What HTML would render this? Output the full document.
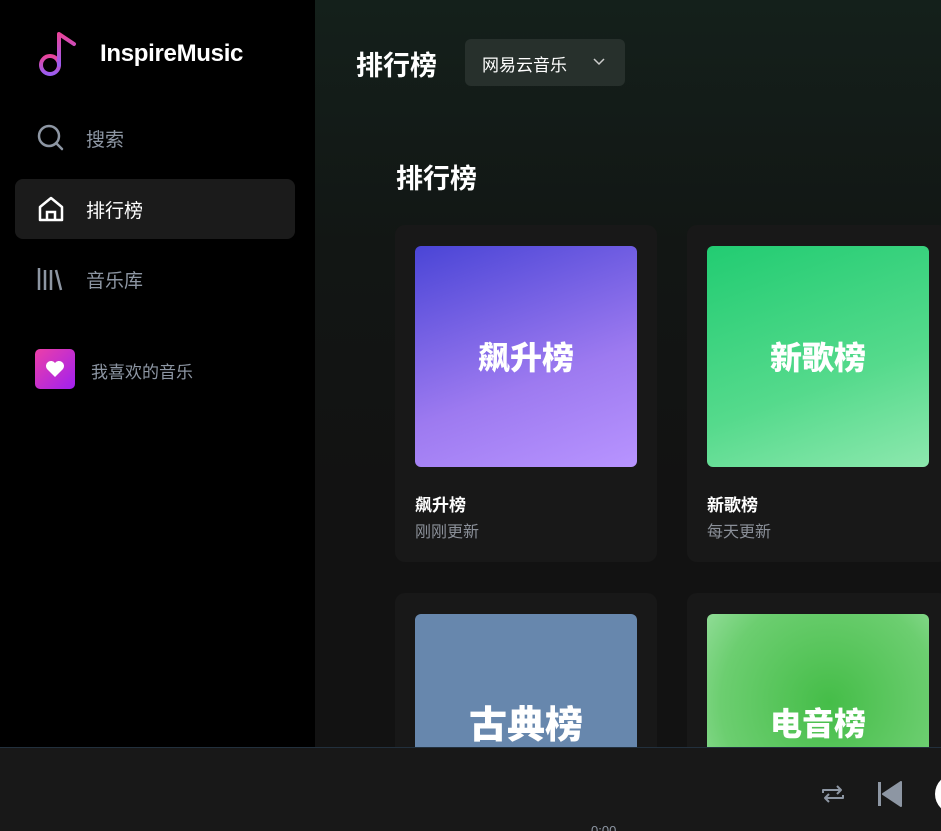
<!DOCTYPE html>
<html><head><meta charset="utf-8"><style>
*{margin:0;padding:0;box-sizing:border-box}
html,body{width:941px;height:831px;overflow:hidden}
body{background:#000;font-family:"Liberation Sans","Noto Sans CJK SC",sans-serif;position:relative}
.side{position:absolute;left:0;top:0;width:315px;height:747px;background:#000}
.main{position:absolute;left:315px;top:0;width:626px;height:747px;background:linear-gradient(180deg,#14201b 0px,#121614 250px,#121212 500px);overflow:hidden}
.nav{position:absolute;left:15px;width:280px;height:60px;border-radius:8px;display:flex;align-items:center;font-size:19px;color:#8d96a3}
.nav svg{position:absolute;left:22px}
.nav span{position:absolute;left:71px}
.card{position:absolute;width:262px;height:337px;background:#181818;border-radius:10px}
.img{position:absolute;left:20px;top:21px;width:222px;height:221px;border-radius:6px;overflow:hidden;color:#fff;font-weight:bold;font-size:32px}
.img b{position:absolute;left:0;right:0;top:87px;text-align:center}
.t{position:absolute;left:20px;top:266px;color:#fff;font-weight:bold;font-size:17px}
.s{position:absolute;left:20px;top:293px;color:#8a8f98;font-size:16px}
.bar{position:absolute;left:0;top:747px;width:941px;height:84px;background:#181818;border-top:1px solid #22303d;overflow:hidden}
</style></head><body>
<div class="side">
<svg style="position:absolute;left:38px;top:30px" width="42" height="48" viewBox="0 0 42 48"><defs><linearGradient id="g" x1="0" y1="0" x2="0" y2="1"><stop offset="0" stop-color="#e8449a"/><stop offset="1" stop-color="#9b5cf0"/></linearGradient></defs><circle cx="12" cy="35" r="9" fill="none" stroke="url(#g)" stroke-width="4"/><path d="M21 35V4l15 10" fill="none" stroke="url(#g)" stroke-width="4" stroke-linecap="round" stroke-linejoin="round"/></svg>
<div style="position:absolute;left:100px;top:40px;color:#fff;font-size:24px;font-weight:bold;letter-spacing:-0.3px">InspireMusic</div>
<div class="nav" style="top:108px"><svg width="28" height="28" viewBox="0 0 28 28"><circle cx="12" cy="12" r="10" fill="none" stroke="#8d96a3" stroke-width="2.5"/><path d="M19 19l6 6" stroke="#8d96a3" stroke-width="2.5" stroke-linecap="round"/></svg><span>搜索</span></div>
<div class="nav" style="top:179px;background:#1b1b1b;color:#fff"><svg width="28" height="28" viewBox="0 0 28 28"><path d="M3 12L14 3l11 9v13H3z" fill="none" stroke="#fff" stroke-width="2.5" stroke-linejoin="round"/><path d="M10 25v-8h8v8" fill="none" stroke="#fff" stroke-width="2.5"/></svg><span>排行榜</span></div>
<div class="nav" style="top:249px"><svg width="26" height="26" viewBox="0 0 26 26"><path d="M2 2v22M8 4v20M14 4v20M19 4l5 20" stroke="#8d96a3" stroke-width="2.5"/></svg><span>音乐库</span></div>
<div style="position:absolute;left:35px;top:349px;width:40px;height:40px;border-radius:5px;background:linear-gradient(135deg,#ec3fa8,#a020f0)"><svg style="position:absolute;left:10px;top:11px" width="20" height="18" viewBox="0 0 20 18"><path d="M10 17L2 9A4.5 4.5 0 0110 3a4.5 4.5 0 018 6z" fill="#fff"/></svg></div>
<div style="position:absolute;left:91px;top:358px;color:#8d96a3;font-size:17px">我喜欢的音乐</div>
</div>
<div class="main">
<div style="position:absolute;left:41px;top:44px;color:#fff;font-size:27px;font-weight:bold">排行榜</div>
<div style="position:absolute;left:150px;top:39px;width:160px;height:47px;background:#27302c;border-radius:6px;color:#fff;font-size:17px;padding:12px 0 0 17px">网易云音乐<svg style="position:absolute;left:128px;top:19px" width="12" height="8" viewBox="0 0 12 8"><path d="M1 1l5 5 5-5" fill="none" stroke="#ccc" stroke-width="1.5"/></svg></div>
<div style="position:absolute;left:81px;top:157px;color:#fff;font-size:27px;font-weight:bold">排行榜</div>
<div class="card" style="left:80px;top:225px"><div class="img" style="background:linear-gradient(160deg,#4a45d6,#9d7af0 60%,#b894ff)"><b>飙升榜</b></div><div class="t">飙升榜</div><div class="s">刚刚更新</div></div>
<div class="card" style="left:372px;top:225px"><div class="img" style="background:linear-gradient(160deg,#22cc72,#55da8c 60%,#8de8ae)"><b>新歌榜</b></div><div class="t">新歌榜</div><div class="s">每天更新</div></div>
<div class="card" style="left:80px;top:593px"><div class="img" style="background:#6787ad"><b style="top:80px;font-size:38px">古典榜</b></div></div>
<div class="card" style="left:372px;top:593px"><div class="img" style="background:radial-gradient(circle at 55% 40%,#45bd48,#6cce70 60%,#a8e6b0)"><b style="top:85px">电音榜</b></div></div>
</div>
<div class="bar">
<svg style="position:absolute;left:820px;top:34px" width="26" height="24" viewBox="0 0 26 24"><path d="M3 11V8h18M17 4l4 4-4 4M23 13v3H5M9 20l-4-4 4-4" fill="none" stroke="#8d96a3" stroke-width="2" stroke-linejoin="round"/></svg>
<svg style="position:absolute;left:877px;top:33px" width="28" height="26" viewBox="0 0 28 26"><rect x="1" y="1" width="3" height="24" fill="#8d96a3"/><path d="M6 13L24 1v24z" fill="#8d96a3" stroke="#8d96a3" stroke-width="2" stroke-linejoin="round"/></svg>
<div style="position:absolute;left:935px;top:26px;width:40px;height:40px;border-radius:50%;background:#fff"></div>
<div style="position:absolute;left:591px;top:76px;color:#8d96a3;font-size:13px;line-height:13px">0:00</div>
</div>
</body></html>
